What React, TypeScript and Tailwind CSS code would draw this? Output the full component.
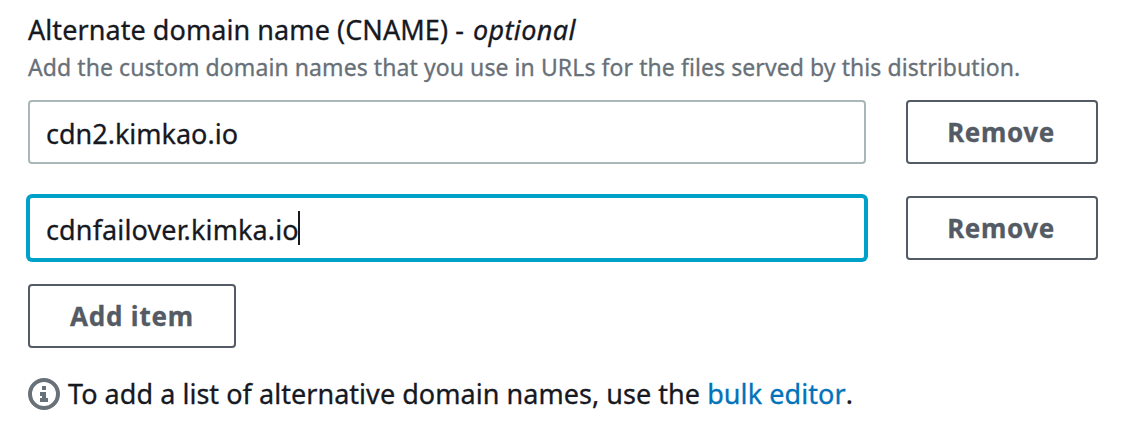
import { useState } from 'react';

function InfoIcon() {
  return (
    <svg className="size-8 shrink-0" viewBox="0 0 32 32" fill="none">
      <circle cx="16" cy="16" r="14" stroke="#687078" strokeWidth="4" />
      <path fill="#687078" d="M14 8h4v4h-4zM12 14h6v6h2v4h-8v-4h2v-2h-2z" />
    </svg>
  );
}

function Button({ children, onClick, className }: { children: string; onClick: () => void; className: string }) {
  return (
    <button
      type="button"
      onClick={onClick}
      className={`h-16 shrink-0 rounded-[4px] border-2 border-[#545b64] bg-white text-center text-[26px] leading-[60px] font-bold whitespace-nowrap text-[#545b64] [-webkit-text-stroke:0.3px] ${className}`}
    >
      {children}
    </button>
  );
}

function DomainRow({ value, focused, onRemove }: { value: string; focused: boolean; onRemove: () => void }) {
  return (
    <div className="flex gap-10">
      <div
        role="textbox"
        className={`flex h-16 w-[838px] items-center rounded-[4px] border-2 bg-white pt-[5px] pl-4 text-[27px] whitespace-nowrap [-webkit-text-stroke:0.3px] ${
          focused ? 'border-[#00a1c9] tracking-[0.13px] ring-2 ring-[#00a1c9]' : 'border-[#aab7b8]'
        }`}
      >
        {value}
        {focused && <span className="-ml-px h-[34px] w-[2px] -translate-y-[3px] bg-[#16191f]" />}
      </div>
      <Button onClick={onRemove} className="w-48 pr-[2px] tracking-[0.6px]">
        Remove
      </Button>
    </div>
  );
}

export default function App() {
  const [domains, setDomains] = useState(['cdn2.kimkao.io', 'cdnfailover.kimka.io']);
  return (
    <main className="h-[432px] w-[1148px] overflow-hidden bg-white pt-[11px] pl-7 font-['Noto_Sans',sans-serif] text-[#16191f]">
      <h2 className="h-10 text-[27px] leading-[37px] font-normal tracking-[0.07px] whitespace-nowrap [-webkit-text-stroke:0.3px]">
        Alternate domain name (CNAME) - <em className="ml-[2px] tracking-[0.35px]">optional</em>
      </h2>
      <p className="h-[49px] text-[23px] leading-[32px] tracking-[0.08px] whitespace-nowrap text-[#687078] [-webkit-text-stroke:0.3px]">
        Add the custom domain names that you use in URLs for the files served by this distribution.
      </p>
      <div className="flex flex-col gap-8">
        {domains.map((d, i) => (
          <DomainRow key={i} value={d} focused={i === 1} onRemove={() => setDomains(domains.filter((_, j) => j !== i))} />
        ))}
      </div>
      <Button onClick={() => setDomains([...domains, ''])} className="mt-6 w-52 tracking-[0.8px]">
        Add item
      </Button>
      <div className="mt-[30px] flex items-center gap-2">
        <InfoIcon />
        <p className="text-[27px] leading-8 tracking-[0.04px] whitespace-nowrap [-webkit-text-stroke:0.3px]">
          To add a list of alternative domain names, use the{' '}
          <a href="#bulk" className="tracking-[0.08px] text-[#0073bb]">bulk editor</a>.
        </p>
      </div>
    </main>
  );
}
